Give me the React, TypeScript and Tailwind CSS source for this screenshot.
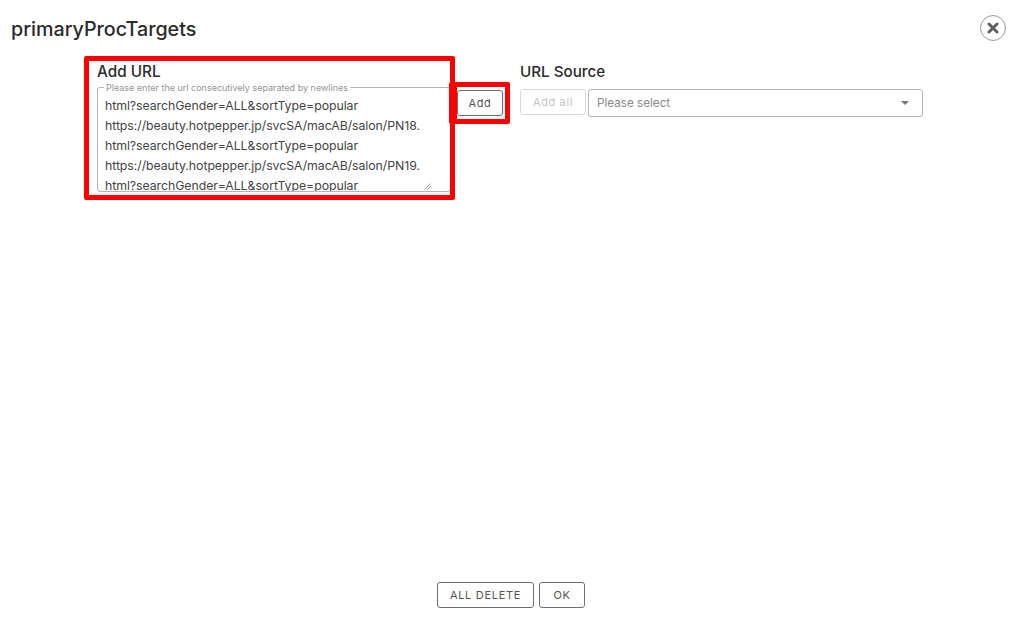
import React from "react";

const url18 = "https://beauty.hotpepper.jp/svcSA/macAB/salon/PN18.";
const url19 = "https://beauty.hotpepper.jp/svcSA/macAB/salon/PN19.";
const q = "html?searchGender=ALL&sortType=popular";

export default function App() {
  return (
    <div className="relative w-[1024px] h-[644px] bg-white overflow-hidden flex flex-col font-['Inter','Noto_Sans_CJK_JP',sans-serif] text-[#2b2b2b]">
      <header className="h-[56px] flex items-start justify-between pl-[11px] pr-[18px]">
        <h1 className="mt-[18px] text-[19.7px] leading-[22px] font-medium">primaryProcTargets</h1>
        <button className="mt-[15px] w-[26px] h-[26px] rounded-full border border-[#999999] flex items-center justify-center">
          <svg width="14" height="14" viewBox="0 0 14 14">
            <path d="M3 3L11 11M11 3L3 11" stroke="#5e5e5e" strokeWidth="3" strokeLinecap="round" />
          </svg>
        </button>
      </header>

      <main className="flex-1 flex pl-[97px]">
        <section className="w-[423px] flex flex-col shrink-0">
          <h2 className="mt-[7px] text-[15.3px] leading-[18px] font-medium">Add URL</h2>
          <div className="flex mt-[6px] items-start">
            <div className="relative w-[354px] h-[105px] border border-[#b5b5b5] rounded-[3px]">
              <span className="absolute left-[6px] -top-[5px] bg-white px-[2px] text-[9px] leading-[10px] text-[#949494] whitespace-nowrap">
                Please enter the url consecutively separated by newlines
              </span>
              <div className="h-full overflow-hidden pl-[7px] pt-[8px] text-[12.3px] tracking-[-0.05px] leading-[20px] text-[#444] whitespace-nowrap">
                <div>{q}</div>
                <div>{url18}</div>
                <div>{q}</div>
                <div>{url19}</div>
                <div>{q}</div>
              </div>
              <svg className="absolute right-[19px] bottom-[1px]" width="7" height="7" viewBox="0 0 7 7">
                <path d="M0.5 6.5L6.5 0.5M3.5 6.5L6.5 3.5" stroke="#888" strokeWidth="0.8" />
              </svg>
            </div>
            <button className="ml-[6px] mt-[3px] w-[46px] h-[26px] border border-[#6f6f6f] rounded-[3px] bg-white text-[11px] tracking-[0.6px] text-[#555]">
              Add
            </button>
          </div>
        </section>

        <section className="w-[403px] flex flex-col shrink-0">
          <h2 className="mt-[7px] text-[15.2px] leading-[18px] font-medium">URL Source</h2>
          <div className="flex gap-[2px] mt-[8px]">
            <button className="w-[66px] h-[26px] border border-[#d8d8d8] rounded-[3px] bg-white text-[11px] tracking-[0.6px] text-[#c4c4c4]">
              Add all
            </button>
            <div className="w-[335px] h-[28px] border border-[#b5b5b5] rounded-[3px] flex items-center justify-between pl-[8px] pr-[13px]">
              <span className="pt-[1px] text-[11.7px] text-[#8a8a8a]">Please select</span>
              <span className="w-0 h-0 border-x-[4px] border-x-transparent border-t-[4px] border-t-[#777]" />
            </div>
          </div>
        </section>
      </main>

      <footer className="h-[62px] flex justify-center gap-[5px] pr-[2px]">
        <button className="w-[97px] h-[26px] border border-[#6f6f6f] rounded-[3px] text-[11px] tracking-[0.7px] text-[#555]">
          ALL DELETE
        </button>
        <button className="w-[46px] h-[26px] border border-[#6f6f6f] rounded-[3px] text-[11px] tracking-[0.6px] text-[#555]">
          OK
        </button>
      </footer>

      <div className="absolute left-[84px] top-[56px] w-[371px] h-[144px] border-[5px] border-[#ff0000] rounded-[2px] pointer-events-none" />
      <div className="absolute left-[449px] top-[82px] w-[61px] h-[42px] border-[5px] border-l-[8px] border-[#ff0000] rounded-[2px] pointer-events-none" />
    </div>
  );
}
